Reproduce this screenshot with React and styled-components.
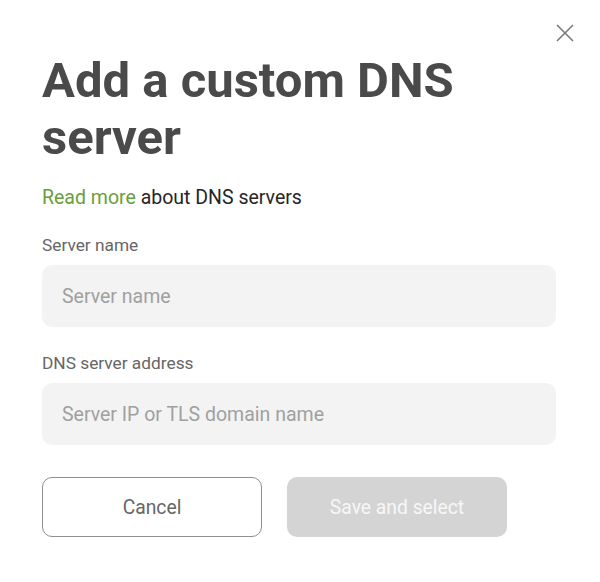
import React, { useState } from "react";
import styled, { createGlobalStyle } from "styled-components";

const GlobalStyle = createGlobalStyle`
  body {
    margin: 0;
    background: #ffffff;
    font-family: Roboto, "Noto Sans", sans-serif;
  }
`;

const Dialog = styled.div`
  position: relative;
  width: 600px;
  height: 582px;
  box-sizing: border-box;
  padding: 52px 44px 0 42px;
  background: #fff;
`;

const CloseButton = styled.button`
  position: absolute;
  top: 22px;
  right: 24px;
  width: 22px;
  height: 22px;
  padding: 0;
  border: none;
  background: transparent;
  cursor: pointer;
  display: flex;
  align-items: center;
  justify-content: center;
`;

const Title = styled.h1`
  margin: 0;
  font-size: 49px;
  line-height: 57px;
  font-weight: 700;
  color: #4a4a4a;
`;

const Intro = styled.p`
  margin: 20px 0 0;
  font-size: 19.5px;
  line-height: 24px;
  color: #262626;
`;

const Link = styled.a`
  color: #67a03a;
  text-decoration: none;
`;

const Field = styled.div`
  display: flex;
  flex-direction: column;
  margin-top: ${(p) => p.$top}px;
`;

const Label = styled.label`
  font-size: 17.3px;
  line-height: 20px;
  color: #666666;
  margin-bottom: 10px;
`;

const Input = styled.input`
  height: 62px;
  box-sizing: border-box;
  border: none;
  border-radius: 10px;
  background: #f3f3f3;
  padding: 0 20px;
  font-family: Roboto, sans-serif;
  font-size: 19.5px;
  color: #333;
  outline: none;

  &::placeholder {
    color: #a0a0a0;
  }
`;

const Actions = styled.div`
  display: flex;
  gap: 25px;
  margin-top: 32px;
`;

const Button = styled.button`
  width: 220px;
  height: 60px;
  box-sizing: border-box;
  border-radius: 10px;
  font-family: Roboto, sans-serif;
  font-size: 19.3px;
  cursor: pointer;
  border: ${(p) => (p.$primary ? "none" : "1px solid #8f8f8f")};
  background: ${(p) => (p.$primary ? "#d4d4d4" : "#ffffff")};
  color: ${(p) => (p.$primary ? "#f7f7f7" : "#666666")};
`;

export default function App() {
  const [name, setName] = useState("");
  const [address, setAddress] = useState("");

  return (
    <>
      <GlobalStyle />
      <Dialog>
        <CloseButton aria-label="Close">
          <svg width="18" height="18" viewBox="0 0 18 18">
            <path d="M1 1L17 17M17 1L1 17" stroke="#7a7a7a" strokeWidth="1.6" />
          </svg>
        </CloseButton>
        <Title>Add a custom DNS server</Title>
        <Intro>
          <Link href="#">Read more</Link> about DNS servers
        </Intro>
        <Field $top={25}>
          <Label>Server name</Label>
          <Input
            placeholder="Server name"
            value={name}
            onChange={(e) => setName(e.target.value)}
          />
        </Field>
        <Field $top={26}>
          <Label>DNS server address</Label>
          <Input
            placeholder="Server IP or TLS domain name"
            value={address}
            onChange={(e) => setAddress(e.target.value)}
          />
        </Field>
        <Actions>
          <Button>Cancel</Button>
          <Button $primary disabled={!name || !address}>
            Save and select
          </Button>
        </Actions>
      </Dialog>
    </>
  );
}
